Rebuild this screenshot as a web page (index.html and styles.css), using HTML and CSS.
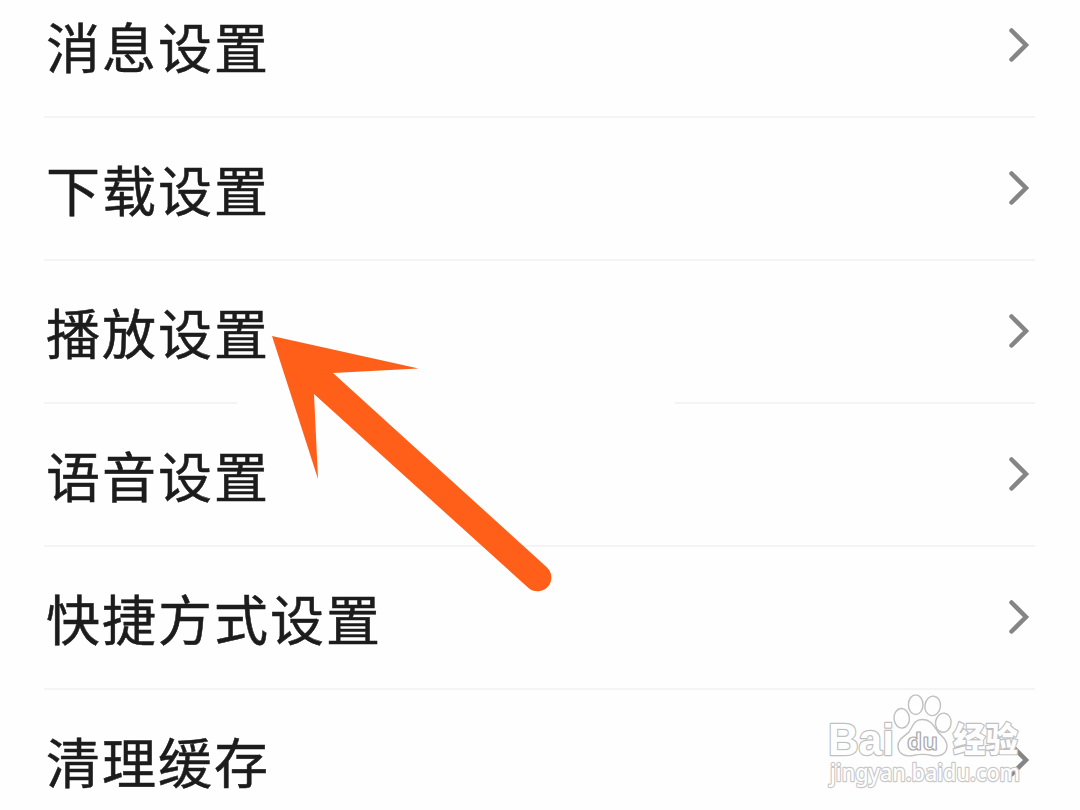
FILE: index.html
```html
<!DOCTYPE html>
<html lang="zh-CN">
<head>
<meta charset="utf-8">
<title>设置</title>
<link rel="stylesheet" href="styles.css">
</head>
<body>
<main class="screen">
  <ul class="settings">
    <li class="row"><span class="label">消息设置</span><svg class="chevron" viewBox="0 0 22 36"><path d="M3.500 3.500 18 18 3.500 32.500"/></svg></li>
    <li class="row"><span class="label">下载设置</span><svg class="chevron" viewBox="0 0 22 36"><path d="M3.500 3.500 18 18 3.500 32.500"/></svg></li>
    <li class="row row-gap"><span class="label">播放设置</span><svg class="chevron" viewBox="0 0 22 36"><path d="M3.500 3.500 18 18 3.500 32.500"/></svg></li>
    <li class="row"><span class="label">语音设置</span><svg class="chevron" viewBox="0 0 22 36"><path d="M3.500 3.500 18 18 3.500 32.500"/></svg></li>
    <li class="row"><span class="label">快捷方式设置</span><svg class="chevron" viewBox="0 0 22 36"><path d="M3.500 3.500 18 18 3.500 32.500"/></svg></li>
    <li class="row"><span class="label">清理缓存</span><svg class="chevron" viewBox="0 0 22 36"><path d="M3.500 3.500 18 18 3.500 32.500"/></svg></li>
  </ul>
  <svg class="arrow" viewBox="0 0 284 260">
    <path d="M2 2 148.500 34.500 63 39 276.500 233A13.500 13.500 0 0 1 258.500 254L44 60 48 145Z"/>
  </svg>
  <svg class="watermark" viewBox="0 0 210 120">
    <g class="outline">
      <ellipse cx="79.700" cy="28.300" rx="7.700" ry="9.800" transform="rotate(-5 79.700 28.300)"/>
      <ellipse cx="93.700" cy="14.700" rx="7.300" ry="9.800"/>
      <ellipse cx="110.700" cy="15.900" rx="7.800" ry="9.800" transform="rotate(8 110.700 15.900)"/>
      <ellipse cx="121.300" cy="32.700" rx="7.800" ry="9.600" transform="rotate(8 121.300 32.700)"/>
      <path d="M100 29.500C109 29.500 112 36 116 42 120 47 125 49 125 56 125 64 118 67 110 65.500 104 64 98 64 91 65.500 83 67 76 64 76 56 76 49 82 47 87 42 91 36 92 29.500 100 29.500Z"/>
      <text class="du" x="85" y="59.500" textLength="31" lengthAdjust="spacingAndGlyphs">du</text>
      <text class="brand" x="6" y="64.500" textLength="66" lengthAdjust="spacingAndGlyphs">Bai</text>
      <text class="product" x="131" y="62" textLength="65" lengthAdjust="spacingAndGlyphs">经验</text>
      <text class="site" x="8" y="91" textLength="190" lengthAdjust="spacingAndGlyphs">jingyan.baidu.com</text>
    </g>
  </svg>
</main>
</body>
</html>
```
FILE: styles.css
```css
body {
  margin: 0;
  background: #fefefe;
}

.screen {
  position: relative;
  height: 810px;
  overflow: hidden;
  font-family: "Noto Sans CJK SC", sans-serif;
}

.settings {
  list-style: none;
  margin: -25px 45px 0 44px;
  padding: 0;
}

.row {
  box-sizing: border-box;
  height: 143px;
  display: flex;
  align-items: center;
  justify-content: space-between;
  border-bottom: 2px solid #f4f4f4;
}

.row-gap {
  border-image: linear-gradient(to right, #f4f4f4 194px, #fefefe 194px, #fefefe 630px, #f4f4f4 630px) 2;
}

.label {
  padding: 1px 0 0 2px;
  color: #1c1c1c;
  font-size: 54px;
  line-height: 80px;
  letter-spacing: 2px;
  -webkit-text-stroke: 0.5px #1c1c1c;
}

.chevron {
  width: 22px;
  height: 36px;
  margin: 0 5px 2px 0;
  fill: none;
  stroke: #858585;
  stroke-width: 4.5;
  stroke-linecap: round;
}

.arrow {
  position: absolute;
  left: 270px;
  top: 334px;
  width: 284px;
  height: 260px;
  fill: #ff5f19;
}

.watermark {
  position: absolute;
  left: 822px;
  top: 690px;
  width: 210px;
  height: 120px;
}

.outline {
  fill: #fefefe;
  stroke: #c0c0c0;
  stroke-width: 1.4;
  stroke-linejoin: round;
}

.outline text {
  stroke-width: 2.4;
  paint-order: stroke;
}

.outline .brand {
  font: bold 44px "Liberation Sans", sans-serif;
}

.outline .du {
  font: bold 23px "Open Sans", sans-serif;
  stroke: #a8a8a8;
  stroke-width: 1.2;
  paint-order: normal;
}

.outline .product {
  font: 900 34px "Noto Sans CJK SC", sans-serif;
}

.outline .site {
  font: 500 23px "Noto Sans", sans-serif;
  stroke: #c8c8c8;
}
```
